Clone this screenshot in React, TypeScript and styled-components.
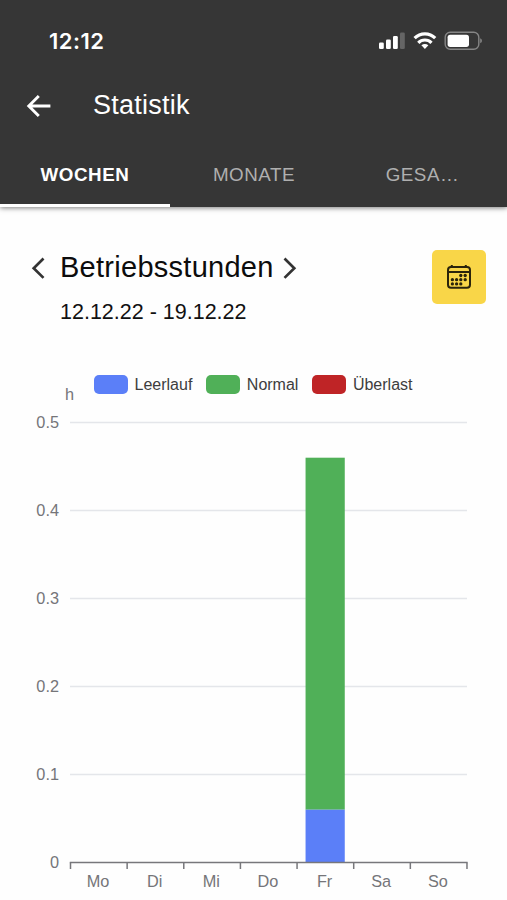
import React from "react";
import styled, { createGlobalStyle } from "styled-components";

const GlobalStyle = createGlobalStyle`
  body { margin: 0; background: #fefefe; font-family: "Liberation Sans", Arial, sans-serif; }
  * { box-sizing: border-box; }
`;

const Screen = styled.div`
  width: 507px;
  height: 900px;
  display: flex;
  flex-direction: column;
  overflow: hidden;
  background: #fefefe;
`;

const Header = styled.header`
  height: 207px;
  flex: none;
  display: flex;
  flex-direction: column;
  background: #363636;
  color: #fff;
  box-shadow: 0 1px 5px rgba(0, 0, 0, 0.5);
`;

const StatusBar = styled.div`
  height: 68px;
  padding: 14px 24px 0 49px;
  display: flex;
  align-items: center;
  justify-content: space-between;
`;

const Clock = styled.span`
  font: 600 22px/26px Inter, sans-serif;
  letter-spacing: 0.5px;
`;

const TitleBar = styled.div`
  height: 74px;
  padding-left: 26px;
  display: flex;
  align-items: center;
  gap: 42px;
`;

const PageTitle = styled.h1`
  margin: 0;
  font-size: 27px;
  line-height: 32px;
  font-weight: 400;
  letter-spacing: 0.25px;
`;

const BackButton = styled.button`
  border: 0;
  padding: 1px 0 0;
  background: none;
  color: #fff;
  display: flex;
`;

const Tabs = styled.nav`
  flex: 1;
  display: grid;
  grid-template-columns: 170px 168px 169px;
`;

const Tab = styled.div<{ $active?: boolean }>`
  display: flex;
  align-items: center;
  justify-content: center;
  border-bottom: 3px solid ${(p) => (p.$active ? "#fff" : "transparent")};
  padding-top: 3px;
  font-size: 18.8px;
  letter-spacing: 0.54px;
  font-weight: ${(p) => (p.$active ? 700 : 400)};
  color: ${(p) => (p.$active ? "#fff" : "#afafaf")};
`;

const Period = styled.section`
  height: 153px;
  flex: none;
  padding: 43px 21.5px 0 30px;
  display: flex;
  justify-content: space-between;
  align-items: flex-start;
`;

const PeriodRow = styled.div`
  display: flex;
  align-items: center;
  height: 35px;
`;

const ArrowButton = styled.button`
  width: 30px;
  border: 0;
  padding: 0;
  background: none;
  color: #333;
  display: flex;
`;

const PeriodTitle = styled.h2`
  margin: 0;
  padding-right: 7px;
  font-size: 29px;
  line-height: 35px;
  font-weight: 400;
  letter-spacing: 0.27px;
  color: #0c0c0c;
`;

const DateRange = styled.div`
  margin: 13px 0 0 30px;
  font-size: 21.5px;
  line-height: 28px;
  color: #111;
`;

const CalendarButton = styled.button`
  width: 54px;
  height: 54px;
  border: 0;
  border-radius: 5px;
  padding: 0;
  display: flex;
  align-items: center;
  justify-content: center;
  background: #f9d648;
`;

const Legend = styled.div`
  height: 48px;
  flex: none;
  padding: 15px 0 0 94px;
  display: flex;
  gap: 14px;
`;

const LegendItem = styled.div`
  height: 19px;
  display: flex;
  align-items: center;
  gap: 6.5px;
  font-size: 16px;
  line-height: 19px;
  color: #3d3d3d;
`;

const Swatch = styled.span<{ $color: string }>`
  width: 34px;
  height: 19px;
  border-radius: 5px;
  background: ${(p) => p.$color};
`;

const Chart = styled.svg`
  display: block;
  flex: none;
  margin-top: -28px;
  font-family: "Liberation Sans", Arial, sans-serif;
  font-size: 16.3px;
  fill: #757579;
`;

const BLUE = "#5b7ff8";
const GREEN = "#50b058";
const RED = "#bf2426";
const series = [
  { name: "Leerlauf", color: BLUE },
  { name: "Normal", color: GREEN },
  { name: "Überlast", color: RED },
];
const days = ["Mo", "Di", "Mi", "Do", "Fr", "Sa", "So"];
const usage = { day: 4, idle: 0.06, normal: 0.4 };

const LEFT = 70.5;
const STEP = 56.64;
const BASE = 482.5;
const yOf = (v: number) => BASE - v * 880;

function StatusIcons() {
  return (
    <svg width="104" height="22" viewBox="379 30 104 22">
      <rect x="379" y="42.5" width="4.8" height="6.5" rx="1.3" fill="#fff" />
      <rect x="386" y="39.5" width="4.8" height="9.5" rx="1.3" fill="#fff" />
      <rect x="393" y="36" width="4.8" height="13" rx="1.3" fill="#fff" />
      <rect x="400" y="32.5" width="4.8" height="16.5" rx="1.3" fill="#656565" />
      <g fill="none" stroke="#fff" strokeWidth="3.2">
        <path d="M414.6 38.2 A14.5 14.5 0 0 1 435.2 38.2" />
        <path d="M418.3 42.8 A9.2 9.2 0 0 1 431.5 42.8" />
      </g>
      <path d="M421.4 45.3 Q424.9 42.7 428.4 45.3 L424.9 48.9Z" fill="#fff" />
      <rect x="445.2" y="32.3" width="33.6" height="17" rx="5" fill="none" stroke="#858585" strokeWidth="1.4" />
      <rect x="447.6" y="34.7" width="21.4" height="12.2" rx="2.6" fill="#fff" />
      <path d="M480.2 38.3 Q482 39 482 40.8 Q482 42.6 480.2 43.3Z" fill="#858585" />
    </svg>
  );
}

function CalendarIcon() {
  const dots = [
    [460.3, 276], [464.7, 276],
    [451.9, 280.2], [456.1, 280.2], [460.3, 280.2], [464.7, 280.2],
    [451.9, 284.4], [456.1, 284.4], [460.3, 284.4],
  ];
  return (
    <svg width="26" height="26" viewBox="445.5 264.5 26 26">
      <g fill="none" stroke="#2b240b" strokeWidth="2">
        <rect x="447.5" y="267.5" width="22" height="20.8" rx="3" />
        <path d="M447.5 272.5 H469.5 M451.3 265.4 V268 M465.3 265.4 V268" />
      </g>
      {dots.map(([x, y]) => (
        <circle key={`${x}-${y}`} cx={x} cy={y} r="1.65" fill="#2b240b" />
      ))}
    </svg>
  );
}

function HoursChart() {
  const barX = LEFT + STEP * usage.day + 8.5;
  const idleTop = yOf(usage.idle);
  const normalTop = yOf(usage.idle + usage.normal);
  return (
    <Chart width="507" height="520" viewBox="0 0 507 520">
      <text x="65" y="19.5">h</text>
      {[0, 0.1, 0.2, 0.3, 0.4, 0.5].map((v) => (
        <g key={v}>
          {v > 0 && <path d={`M70 ${yOf(v)}H467`} stroke="#e4e6ea" strokeWidth="1.3" />}
          <text x="59" y={yOf(v) + 5.5} textAnchor="end">{v}</text>
        </g>
      ))}
      <rect x={barX} y={normalTop} width="39.2" height={idleTop - normalTop} fill={GREEN} />
      <rect x={barX} y={idleTop} width="39.2" height={BASE - idleTop} fill={BLUE} />
      <path d={`M69.8 ${BASE}H467.6`} stroke="#77777b" strokeWidth="1.6" />
      {[...days, ""].map((_, i) => (
        <path key={i} d={`M${LEFT + STEP * i} ${BASE}v6.5`} stroke="#77777b" strokeWidth="1.5" />
      ))}
      {days.map((d, i) => (
        <text key={d} x={LEFT + STEP * (i + 0.5) - 0.8} y="507" textAnchor="middle">{d}</text>
      ))}
    </Chart>
  );
}

export default function App() {
  return (
    <Screen>
      <GlobalStyle />
      <Header>
        <StatusBar>
          <Clock>12:12</Clock>
          <StatusIcons />
        </StatusBar>
        <TitleBar>
          <BackButton aria-label="Zurück">
            <svg width="25" height="24" viewBox="0 0 25 24" fill="none" stroke="currentColor" strokeWidth="2.9">
              <path d="M12.8 2 L2.8 12 L12.8 22 M2.8 12 H24.4" />
            </svg>
          </BackButton>
          <PageTitle>Statistik</PageTitle>
        </TitleBar>
        <Tabs>
          <Tab $active>WOCHEN</Tab>
          <Tab>MONATE</Tab>
          <Tab>GESA…</Tab>
        </Tabs>
      </Header>
      <Period>
        <div>
          <PeriodRow>
            <ArrowButton aria-label="Zurück">
              <svg width="16" height="24" viewBox="0 0 16 24" fill="none" stroke="currentColor" strokeWidth="2.7">
                <path d="M13.5 2.5 L3.7 12.2 L13.5 21.9" />
              </svg>
            </ArrowButton>
            <PeriodTitle>Betriebsstunden</PeriodTitle>
            <ArrowButton aria-label="Weiter">
              <svg width="16" height="24" viewBox="0 0 16 24" fill="none" stroke="currentColor" strokeWidth="2.7">
                <path d="M3.5 2.5 L13.3 12.2 L3.5 21.9" />
              </svg>
            </ArrowButton>
          </PeriodRow>
          <DateRange>12.12.22 - 19.12.22</DateRange>
        </div>
        <CalendarButton aria-label="Kalender">
          <CalendarIcon />
        </CalendarButton>
      </Period>
      <Legend>
        {series.map((s) => (
          <LegendItem key={s.name}>
            <Swatch $color={s.color} />
            {s.name}
          </LegendItem>
        ))}
      </Legend>
      <HoursChart />
    </Screen>
  );
}
